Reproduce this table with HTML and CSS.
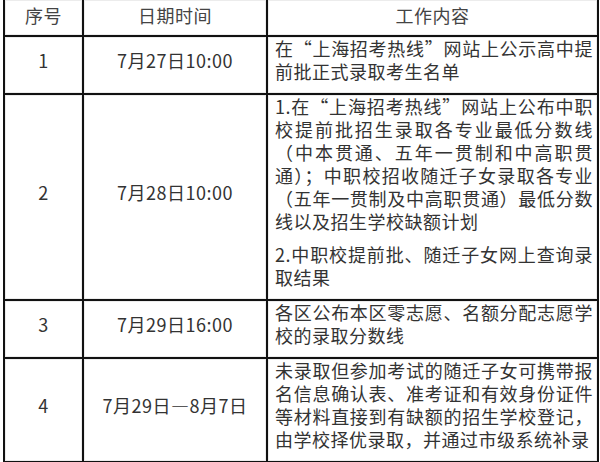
FILE: index.html
```html
<!DOCTYPE html>
<html lang="zh-CN">
<head>
<meta charset="utf-8">
<title>录取工作安排</title>
<link rel="stylesheet" href="styles.css">
</head>
<body>
<table class="schedule">
  <colgroup>
    <col class="c-no">
    <col class="c-date">
    <col class="c-work">
  </colgroup>
  <thead>
    <tr>
      <th>序号</th>
      <th>日期时间</th>
      <th>工作内容</th>
    </tr>
  </thead>
  <tbody>
    <tr>
      <td class="num"><p>1</p></td>
      <td class="date"><p>7月27日10:00</p></td>
      <td class="work"><p><span class="ln">在“上海招考热线”网站上公示高中提</span><span class="ln end">前批正式录取考生名单</span></p></td>
    </tr>
    <tr>
      <td class="num"><p>2</p></td>
      <td class="date"><p>7月28日10:00</p></td>
      <td class="work">
        <p><span class="ln">1.在“上海招考热线”网站上公布中职</span><span class="ln">校提前批招生录取各专业最低分数线</span><span class="ln">（中本贯通、五年一贯制和中高职贯</span><span class="ln">通）；中职校招收随迁子女录取各专业</span><span class="ln">（五年一贯制及中高职贯通）最低分数</span><span class="ln end">线以及招生学校缺额计划</span></p>
        <p><span class="ln">2.中职校提前批、随迁子女网上查询录</span><span class="ln end">取结果</span></p>
      </td>
    </tr>
    <tr>
      <td class="num"><p>3</p></td>
      <td class="date"><p>7月29日16:00</p></td>
      <td class="work"><p><span class="ln">各区公布本区零志愿、名额分配志愿学</span><span class="ln end">校的录取分数线</span></p></td>
    </tr>
    <tr>
      <td class="num"><p>4</p></td>
      <td class="date"><p>7月29日—8月7日</p></td>
      <td class="work"><p><span class="ln">未录取但参加考试的随迁子女可携带报</span><span class="ln">名信息确认表、准考证和有效身份证件</span><span class="ln">等材料直接到有缺额的招生学校登记，</span><span class="ln end">由学校择优录取，并通过市级系统补录</span></p></td>
    </tr>
  </tbody>
</table>
</body>
</html>
```
FILE: styles.css
```css
html, body {
  margin: 0;
  padding: 0;
  background: #ffffff;
}

body {
  font-family: "Noto Sans CJK SC", "Noto Sans", sans-serif;
  font-size: 18px;
  color: #333333;
  letter-spacing: 0.5px;
}

.schedule {
  border-collapse: collapse;
  table-layout: fixed;
  width: 594px;
  margin: -2px 0 0 3px;
}

.c-no { width: 79px; }
.c-date { width: 184px; }
.c-work { width: 331px; }

.schedule th,
.schedule td {
  border: 2px solid #111111;
  vertical-align: middle;
  box-shadow: inset 0 0 0 1px #ececec;
}

.schedule th {
  font-weight: normal;
  color: #444444;
  line-height: 23px;
  padding: 4px 0 8px;
  text-align: center;
}

.schedule td {
  padding: 0;
  line-height: 23px;
}

.schedule p {
  margin: 0 0 10px;
}

.num,
.date {
  text-align: center;
}

.work {
  padding: 0 4px 0 7px !important;
}

.work p + p {
  margin-top: 0;
}

.ln {
  display: block;
  text-align: justify;
  text-align-last: justify;
  white-space: nowrap;
}

.ln.end {
  text-align-last: left;
}
```
